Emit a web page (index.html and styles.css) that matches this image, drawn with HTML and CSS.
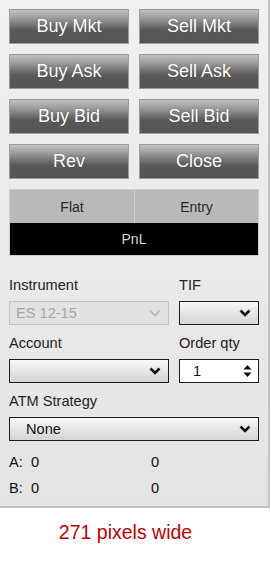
FILE: index.html
```html
<!DOCTYPE html>
<html>
<head>
<meta charset="utf-8">
<link rel="stylesheet" href="styles.css">
</head>
<body>
<div class="panel">
  <div class="btn-grid">
    <div class="btn">Buy Mkt</div>
    <div class="btn">Sell Mkt</div>
    <div class="btn">Buy Ask</div>
    <div class="btn">Sell Ask</div>
    <div class="btn">Buy Bid</div>
    <div class="btn">Sell Bid</div>
    <div class="btn">Rev</div>
    <div class="btn">Close</div>
  </div>
  <div class="pos">
    <div class="pos-row">
      <div class="pos-cell">Flat</div>
      <div class="pos-cell">Entry</div>
    </div>
    <div class="pnl">PnL</div>
  </div>
  <div class="form">
    <div class="field wide">
      <div class="label">Instrument</div>
      <div class="select disabled"><span>ES 12-15</span>
        <svg class="chev" width="12" height="8" viewBox="0 0 12 8"><path d="M1 1.5 L6 6.5 L11 1.5" fill="none" stroke="#b8b8b8" stroke-width="1.6"/></svg>
      </div>
    </div>
    <div class="field narrow">
      <div class="label">TIF</div>
      <div class="select"><span></span>
        <svg class="chev" width="12" height="8" viewBox="0 0 12 8"><path d="M1.5 1.5 L6 6 L10.5 1.5" fill="none" stroke="#111" stroke-width="2.6"/></svg>
      </div>
    </div>
    <div class="field wide">
      <div class="label">Account</div>
      <div class="select"><span></span>
        <svg class="chev" width="12" height="8" viewBox="0 0 12 8"><path d="M1.5 1.5 L6 6 L10.5 1.5" fill="none" stroke="#111" stroke-width="2.6"/></svg>
      </div>
    </div>
    <div class="field narrow">
      <div class="label">Order qty</div>
      <div class="spin"><span>1</span>
        <svg class="arrows" width="9" height="14" viewBox="0 0 9 14"><path d="M0.5 5.5 L4.5 1 L8.5 5.5 Z M0.5 8.5 L4.5 13 L8.5 8.5 Z" fill="#111"/></svg>
      </div>
    </div>
    <div class="field full">
      <div class="label">ATM Strategy</div>
      <div class="select"><span>None</span>
        <svg class="chev" width="12" height="8" viewBox="0 0 12 8"><path d="M1.5 1.5 L6 6 L10.5 1.5" fill="none" stroke="#111" stroke-width="2.6"/></svg>
      </div>
    </div>
  </div>
  <div class="quotes">
    <div class="q-row"><span class="q-key">A:</span><span class="q-val">0</span><span class="q-val2">0</span></div>
    <div class="q-row"><span class="q-key">B:</span><span class="q-val">0</span><span class="q-val2">0</span></div>
  </div>
</div>
<div class="caption">271 pixels wide</div>
</body>
</html>
```
FILE: styles.css
```css
html, body {
  margin: 0;
  padding: 0;
  background: #ffffff;
  font-family: "Liberation Sans", Arial, sans-serif;
}
.panel {
  box-sizing: border-box;
  width: 270px;
  height: 508px;
  padding: 9px 9px 0 9px;
  background: linear-gradient(#f0f0f0, #e4e4e4);
  border-right: 2px solid #c3c3c3;
  border-bottom: 2px solid #c3c3c3;
}
.btn-grid {
  display: grid;
  grid-template-columns: 120px 120px;
  column-gap: 10px;
  row-gap: 10px;
}
.btn {
  box-sizing: border-box;
  height: 35px;
  border: 1px solid #9c9c9c;
  background: linear-gradient(#c2c2c2 0%, #9a9a9a 25%, #6c6c6c 50%, #585858 62%, #555555 100%);
  color: #ffffff;
  font-size: 18px;
  display: flex;
  align-items: center;
  justify-content: center;
  text-shadow: 0 0 1px rgba(0,0,0,0.35);
}
.pos {
  margin-top: 10px;
  width: 250px;
  box-sizing: border-box;
  border: 1px solid #cfcfcf;
}
.pos-row {
  display: grid;
  grid-template-columns: 1fr 1fr;
  height: 33px;
  background: #b9b9b9;
}
.pos-cell {
  display: flex;
  align-items: center;
  justify-content: center;
  font-size: 14px;
  color: #2a2a2a;
}
.pos-cell + .pos-cell {
  border-left: 1px solid #d0d0d0;
}
.pnl {
  height: 32px;
  background: #000000;
  color: #d8d8d8;
  font-size: 14px;
  display: flex;
  align-items: center;
  justify-content: center;
}
.form {
  margin-top: 21px;
  display: grid;
  grid-template-columns: 160px 80px;
  column-gap: 10px;
  row-gap: 10px;
}
.field.full {
  grid-column: 1 / 3;
}
.label {
  font-size: 14.6px;
  color: #222;
  height: 17px;
  line-height: 17px;
  margin-bottom: 7px;
}
.select, .spin {
  box-sizing: border-box;
  height: 24px;
  border: 1px solid #1e1e1e;
  background: linear-gradient(#f7f7f7, #d4d4d4);
  display: flex;
  align-items: center;
  justify-content: space-between;
  padding: 0 7px 0 10px;
  font-size: 14.6px;
  color: #111;
}
.select.disabled {
  border-color: #c4c4c4;
  background: #e2e2e2;
  color: #a6a6a6;
  padding-left: 6px;
}
.field.full .select {
  padding-left: 16px;
}
.spin {
  background: #ffffff;
  padding: 0 6px 0 13px;
}
.quotes {
  margin-top: 8px;
}
.q-row {
  display: flex;
  height: 26px;
  align-items: center;
  font-size: 14.6px;
  color: #111;
}
.q-key {
  width: 22px;
}
.q-val {
  width: 120px;
}
.caption {
  text-align: center;
  color: #c00000;
  font-size: 19.5px;
  margin-top: 13px;
  width: 251px;
}
```
